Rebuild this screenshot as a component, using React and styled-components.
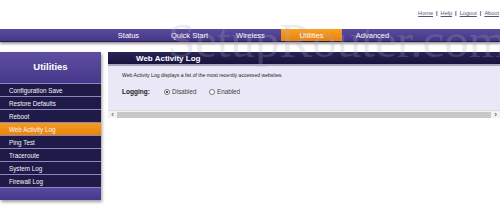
import React from "react";
import styled, { createGlobalStyle } from "styled-components";

const GlobalStyle = createGlobalStyle`
  body {
    margin: 0;
    background: #ffffff;
    font-family: "Liberation Sans", Arial, sans-serif;
  }
`;

const navItems = ["Status", "Quick Start", "Wireless", "Utilities", "Advanced"];
const sideItems = [
  "Configuration Save",
  "Restore Defaults",
  "Reboot",
  "Web Activity Log",
  "Ping Test",
  "Traceroute",
  "System Log",
  "Firewall Log",
];

function App() {
  return (
    <Page>
      <GlobalStyle />
      <TopLinks>
        <a>Home</a>
        <Sep>|</Sep>
        <a>Help</a>
        <Sep>|</Sep>
        <a>Logout</a>
        <Sep>|</Sep>
        <a>About</a>
      </TopLinks>
      <NavBar>
        <NavList>
          {navItems.map((item) => (
            <NavItem key={item} active={item === "Utilities"}>
              {item}
            </NavItem>
          ))}
        </NavList>
      </NavBar>
      <Main>
        <Sidebar>
          <SideHeader>Utilities</SideHeader>
          {sideItems.map((item) => (
            <SideItem key={item} active={item === "Web Activity Log"}>
              {item}
            </SideItem>
          ))}
          <SideFooter />
        </Sidebar>
        <Content>
          <TitleBar>Web Activity Log</TitleBar>
          <Body>
            <Description>
              Web Activity Log displays a list of the most recently accessed
              websites.
            </Description>
            <FieldRow>
              <FieldLabel>Logging:</FieldLabel>
              <Radio checked />
              <RadioText>Disabled</RadioText>
              <Radio />
              <RadioText>Enabled</RadioText>
            </FieldRow>
          </Body>
          <ScrollBar>
            <Arrow>‹</Arrow>
            <Track />
            <Arrow>›</Arrow>
          </ScrollBar>
        </Content>
      </Main>
      <Watermark>SetupRouter.com</Watermark>
    </Page>
  );
}

const Page = styled.div`
  position: relative;
  width: 500px;
  height: 208px;
  overflow: hidden;
`;

const TopLinks = styled.div`
  height: 29px;
  display: flex;
  justify-content: flex-end;
  align-items: center;
  padding-right: 1px;
  padding-bottom: 3px;
  box-sizing: border-box;
  font-size: 5.6px;
  color: #55557a;

  a {
    text-decoration: underline;
  }
`;

const Sep = styled.span`
  margin: 0 3px;
  font-weight: bold;
  color: #333;
`;

const NavBar = styled.div`
  height: 12px;
  background: linear-gradient(#5b4b9f, #453686);
  border-bottom: 1px solid #241d55;
  box-shadow: 0 2px 2px rgba(120, 120, 120, 0.7);
`;

const NavList = styled.div`
  display: flex;
  margin-left: 98px;
  height: 100%;
`;

const NavItem = styled.div`
  width: 61px;
  height: 100%;
  display: flex;
  align-items: center;
  justify-content: center;
  font-size: 7.5px;
  color: #ffffff;
  background: ${({ active }) =>
    active ? "linear-gradient(#f7a026, #e8820c)" : "transparent"};
`;

const Main = styled.div`
  display: flex;
  align-items: flex-start;
  margin-top: 10px;
`;

const Sidebar = styled.div`
  width: 101px;
  background: #1f1a48;
  box-shadow: 1px 2px 3px rgba(90, 90, 90, 0.6);
`;

const SideHeader = styled.div`
  height: 32px;
  display: flex;
  align-items: center;
  justify-content: center;
  padding-bottom: 2px;
  box-sizing: border-box;
  background: linear-gradient(#5d4ea2, #46388a);
  color: #ffffff;
  font-weight: bold;
  font-size: 9.5px;
  border-bottom: 1px solid #8d87bb;
`;

const SideItem = styled.div`
  height: 12px;
  display: flex;
  align-items: center;
  padding-left: 9px;
  font-size: 6.3px;
  color: #f4f4fa;
  border-bottom: 1px solid #8d87bb;
  background: ${({ active }) =>
    active ? "linear-gradient(#f59c1f, #e9830c)" : "#1f1a48"};
`;

const SideFooter = styled.div`
  height: 12px;
  background: linear-gradient(#5849a0, #45378a);
`;

const Content = styled.div`
  flex: 1;
  margin-left: 7px;
`;

const TitleBar = styled.div`
  height: 12px;
  display: flex;
  align-items: center;
  padding-left: 28px;
  background: linear-gradient(#2a2458, #17133e);
  color: #ffffff;
  font-weight: bold;
  font-size: 8px;
  border-bottom: 2px solid #a9a7bd;
`;

const Body = styled.div`
  background: #eae8f6;
  height: 44px;
  padding: 6px 0 0 14px;
  box-sizing: border-box;
`;

const Description = styled.div`
  font-size: 5.1px;
  color: #222;
`;

const FieldRow = styled.div`
  display: flex;
  align-items: center;
  margin-top: 10px;
`;

const FieldLabel = styled.span`
  font-weight: bold;
  font-size: 6.5px;
  color: #222;
  width: 42px;
`;

const Radio = styled.span`
  width: 4px;
  height: 4px;
  border-radius: 50%;
  border: 0.6px solid #777;
  background: #fff;
  display: inline-flex;
  align-items: center;
  justify-content: center;

  &::after {
    content: "";
    width: 2px;
    height: 2px;
    border-radius: 50%;
    background: ${({ checked }) => (checked ? "#222" : "transparent")};
  }
`;

const RadioText = styled.span`
  font-size: 6.3px;
  color: #444;
  margin-left: 2px;
  width: 37px;
`;

const ScrollBar = styled.div`
  height: 7px;
  display: flex;
  align-items: center;
  background: #f2f2f2;
  border-top: 1px solid #ddd;
`;

const Arrow = styled.span`
  width: 9px;
  text-align: center;
  font-size: 8px;
  line-height: 7px;
  color: #333;
`;

const Track = styled.div`
  flex: 1;
  height: 6px;
  background: #c8c8c8;
`;

const Watermark = styled.div`
  position: absolute;
  left: 168px;
  top: 12px;
  font-family: "Liberation Serif", "Times New Roman", serif;
  font-size: 49px;
  color: rgba(170, 170, 185, 0.24);
  pointer-events: none;
  white-space: nowrap;
`;

export default App;
